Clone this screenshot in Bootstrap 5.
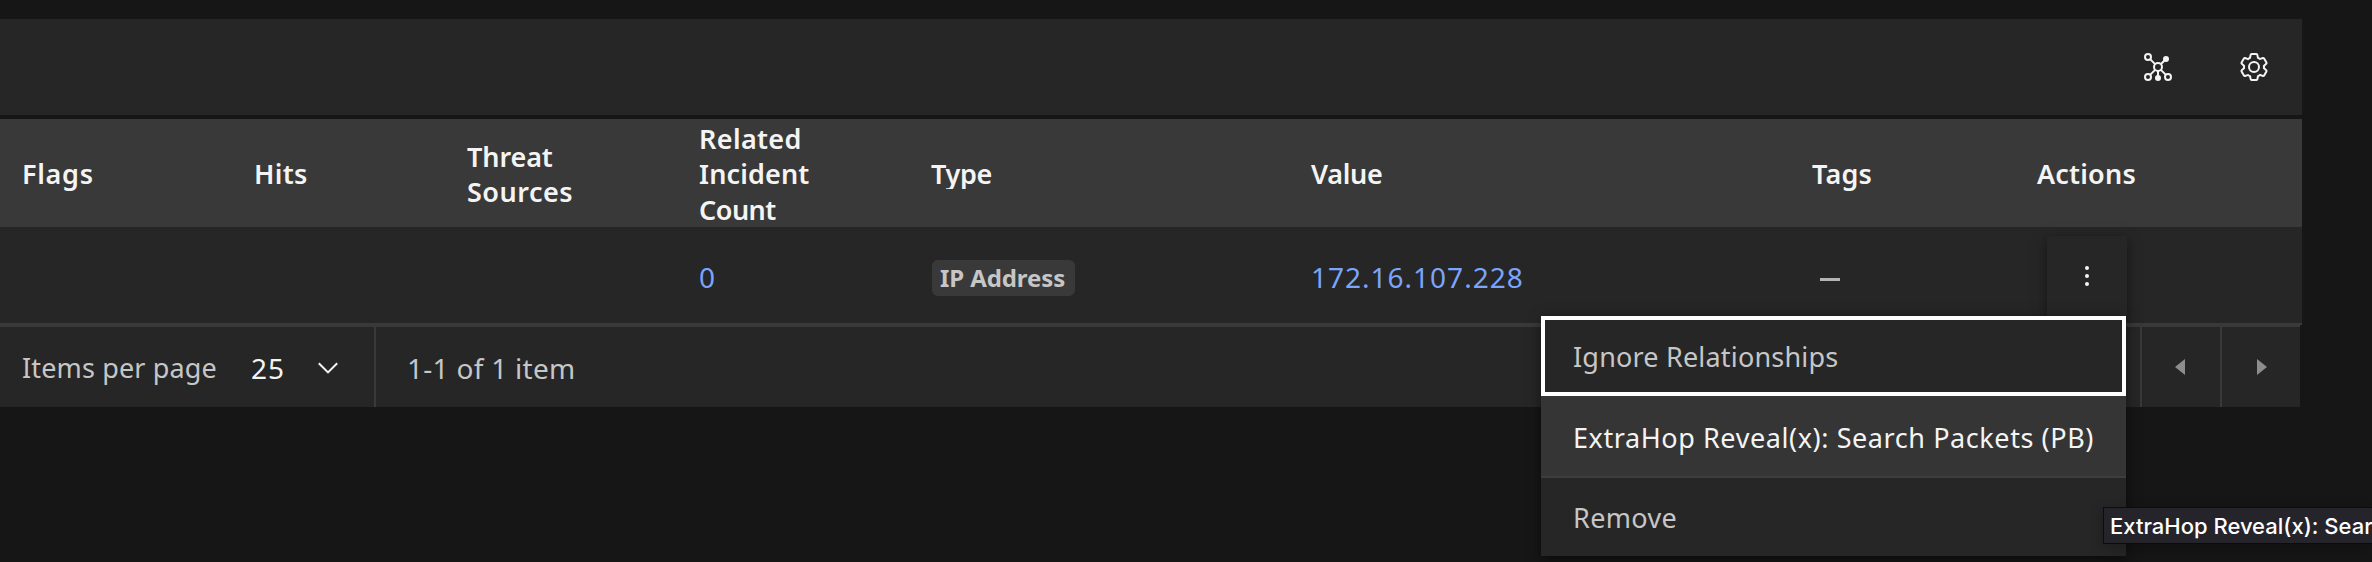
<!DOCTYPE html>
<html lang="en" data-bs-theme="dark">
<head>
<meta charset="utf-8">
<meta name="viewport" content="width=device-width, initial-scale=1">
<title>Artifacts</title>
<link rel="stylesheet" href="https://cdn.jsdelivr.net/npm/bootstrap@5.3.0/dist/css/bootstrap.min.css">
<style>
  body { background: #161616; color: #c6c6c6; font-family: "Noto Sans", sans-serif; font-size: 27px; line-height: 36px; overflow: hidden; height: 562px; }
  .panel { width: 2302px; padding-top: 19px; }
  .toolbar { height: 96px; background: #262626; margin-bottom: 4px; padding-right: 32px; gap: 64px; }
  .toolbar svg { width: 32px; height: 32px; fill: #f4f4f4; display: block; }
  .artifacts { table-layout: fixed; width: 2302px; border-collapse: separate; border-spacing: 0; }
  .artifacts th, .artifacts td { padding: 0 0 0 23px; vertical-align: middle; text-align: left; }
  .artifacts th { height: 108px; padding-top: 2px; line-height: 35.3px; background: #393939; color: #f4f4f4; font-weight: 600; }
  .artifacts th:nth-child(-n+2) { padding-left: 22px; }
  .artifacts td { height: 98px; background: #262626; border-bottom: 2px solid #393939; font-size: 28px; white-space: nowrap; }
  .cell-link { display: inline-block; padding-top: 3px; color: #7ba5fb; text-decoration: none; }
  .clipped { height: 33px; overflow: hidden; margin-bottom: 3px; }
  .type-tag { display: block; width: 143px; height: 36px; margin: 5px 0 0 1px; padding-left: 8px; border-radius: 6px; background: #393939; color: #c6c6c6; font-size: 24px; font-weight: 700; letter-spacing: -.1px; }
  .artifacts td.actions { padding: 9px 0 7px 33px; overflow: visible; }
  .overflow-btn { display: flex; width: 80px; height: 80px; padding: 0; border: 0; border-radius: 0; background: #262626; box-shadow: 0 4px 12px rgba(0,0,0,.5); align-items: center; justify-content: center; }
  .row-menu { display: block; top: 80px; right: 1px; left: auto; width: 585px; padding: 0; margin: 0; border: 0; border-radius: 0; background: #262626; box-shadow: 0 4px 12px rgba(0,0,0,.5); z-index: 5; }
  .row-menu .dropdown-item { display: block; height: 80px; padding: 1px 0 0 32px; line-height: 80px; font-size: 27px; color: #c6c6c6; }
  .row-menu .is-focused { outline: 4px solid #fff; outline-offset: -4px; }
  .row-menu .is-hovered { height: 82px; padding-top: 2px; background: #353535; color: #f4f4f4; border-bottom: 2px solid #3d3d3d; }
  .row-menu .is-last { height: 78px; line-height: 78px; }
  .pager { width: 2300px; height: 82px; background: #262626; border-top: 2px solid #393939; }
  .per-page { width: 376px; padding: 1px 0 0 22px; border-right: 2px solid #393939; }
  .page-size { color: #f4f4f4; font-size: 28px; letter-spacing: 1px; margin-left: 34px; width: 67px; }
  .page-range { padding: 1px 0 0 31px; font-size: 28px; letter-spacing: .28px; }
  .page-btn { width: 80px; border: 0; border-left: 2px solid #393939; background: transparent; padding: 0; }
  .page-btn.prev { padding-left: 33px; }
  .page-btn.next { padding-left: 35px; }
  .page-btn svg { fill: #8d8d8d; display: block; }
  .hover-title { position: absolute; left: 2103px; right: 0; top: 507px; height: 37px; padding-left: 6px; overflow: hidden; background: #25242a; border: 1px solid #0c0c0c; border-right: 0; color: #fff; font: 500 22px/37px Inter, sans-serif; white-space: nowrap; z-index: 10; box-shadow: 0 4px 14px rgba(0,0,0,.25); }
</style>
</head>
<body class="position-relative">
<main class="panel">
  <div class="toolbar d-flex align-items-center justify-content-end">
    <svg viewBox="0 0 32 32" aria-label="Graph">
      <g fill="none" stroke="#f4f4f4" stroke-width="2">
        <circle cx="6" cy="6" r="3"/><circle cx="6" cy="26" r="3"/><circle cx="26" cy="26" r="3"/><circle cx="16" cy="16" r="4"/>
        <path d="M8.1 8.1l5 5M19 13l4-4M13.1 18.9l-5 5M18.9 18.9l5 5M16 20v5"/>
      </g>
      <circle cx="24" cy="8" r="3"/><circle cx="16" cy="27" r="3"/>
    </svg>
    <svg viewBox="0 0 32 32" aria-label="Settings">
      <path d="M27,16.76c0-.25,0-.5,0-.76s0-.51,0-.77l1.92-1.68A2,2,0,0,0,29.3,11L26.94,7a2,2,0,0,0-1.73-1,2,2,0,0,0-.64.1l-2.43.82a11.35,11.35,0,0,0-1.31-.75l-.51-2.52a2,2,0,0,0-2-1.61H13.64a2,2,0,0,0-2,1.61l-.51,2.52a11.48,11.48,0,0,0-1.32.75L7.43,6.06A2,2,0,0,0,6.79,6,2,2,0,0,0,5.06,7L2.7,11a2,2,0,0,0,.41,2.51L5,15.24c0,.25,0,.5,0,.76s0,.51,0,.77L3.11,18.45A2,2,0,0,0,2.7,21L5.06,25a2,2,0,0,0,1.73,1,2,2,0,0,0,.64-.1l2.43-.82a11.35,11.35,0,0,0,1.31.75l.51,2.52a2,2,0,0,0,2,1.61h4.72a2,2,0,0,0,2-1.61l.51-2.52a11.48,11.48,0,0,0,1.32-.75l2.42.82a2,2,0,0,0,.64.1,2,2,0,0,0,1.73-1L29.3,21a2,2,0,0,0-.41-2.51ZM25.21,24l-3.43-1.16a8.86,8.86,0,0,1-2.71,1.57L18.36,28H13.64l-.71-3.55a9.36,9.36,0,0,1-2.7-1.57L6.79,24,4.43,20l2.72-2.4a8.9,8.9,0,0,1,0-3.13L4.43,12,6.79,8l3.43,1.16a8.86,8.86,0,0,1,2.71-1.57L13.64,4h4.72l.71,3.55a9.36,9.36,0,0,1,2.7,1.57L25.21,8,27.57,12l-2.72,2.4a8.9,8.9,0,0,1,0,3.13L27.57,20Z"/>
      <circle cx="16" cy="16" r="5" fill="none" stroke="#f4f4f4" stroke-width="2"/>
    </svg>
  </div>

  <table class="artifacts">
    <colgroup>
      <col style="width:232px"><col style="width:212px"><col style="width:232px"><col style="width:232px"><col style="width:380px"><col style="width:501px"><col style="width:225px"><col style="width:288px">
    </colgroup>
    <thead>
      <tr>
        <th style="letter-spacing:.7px">Flags</th>
        <th style="letter-spacing:.3px">Hits</th>
        <th><span style="letter-spacing:-.1px">Threat</span><br><span style="letter-spacing:.5px">Sources</span></th>
        <th><span style="letter-spacing:.36px">Related</span><br><span style="letter-spacing:.14px">Incident</span><br><span style="letter-spacing:-.5px">Count</span></th>
        <th style="letter-spacing:-.3px"><div class="clipped">Type</div></th>
        <th style="letter-spacing:-.3px">Value</th>
        <th style="letter-spacing:.2px">Tags</th>
        <th style="letter-spacing:.2px">Actions</th>
      </tr>
    </thead>
    <tbody>
      <tr>
        <td></td><td></td><td></td>
        <td><a class="cell-link" href="#">0</a></td>
        <td><span class="type-tag">IP Address</span></td>
        <td><a class="cell-link" href="#" style="letter-spacing:1px">172.16.107.228</a></td>
        <td><svg class="d-block ms-2 mt-2" width="20" height="3"><rect width="20" height="3" fill="#b4b4b4"/></svg></td>
        <td class="actions">
          <div class="dropdown" style="width:80px">
            <button class="overflow-btn" type="button" aria-label="Options">
              <svg width="8" height="24" fill="#f4f4f4"><circle cx="4" cy="4" r="2"/><circle cx="4" cy="12" r="2"/><circle cx="4" cy="20" r="2"/></svg>
            </button>
            <div class="dropdown-menu row-menu position-absolute">
              <a class="dropdown-item is-focused" href="#" style="letter-spacing:.19px">Ignore Relationships</a>
              <a class="dropdown-item is-hovered" href="#" style="letter-spacing:.58px">ExtraHop Reveal(x): Search Packets (PB)</a>
              <a class="dropdown-item is-last" href="#" style="letter-spacing:.34px">Remove</a>
            </div>
          </div>
        </td>
      </tr>
    </tbody>
  </table>

  <div class="pager d-flex align-items-stretch">
    <div class="per-page d-flex align-items-center">
      <span style="letter-spacing:.14px">Items per page</span>
      <span class="page-size">25</span>
      <svg width="20" height="12" fill="none" stroke="#f4f4f4" stroke-width="2"><path d="M.8 1.2L10 10.4 19.2 1.2"/></svg>
    </div>
    <div class="page-range d-flex align-items-center flex-grow-1">1-1 of 1 item</div>
    <button class="page-btn prev d-flex align-items-center" type="button" aria-label="Previous page"><svg width="10" height="16"><path d="M10 0v16L0 8z"/></svg></button>
    <button class="page-btn next d-flex align-items-center" type="button" aria-label="Next page"><svg width="10" height="16"><path d="M0 0v16l10-8z"/></svg></button>
  </div>
</main>
<div class="hover-title">ExtraHop Reveal(x): Search Packets (PB)</div>
<script src="https://cdn.jsdelivr.net/npm/bootstrap@5.3.0/dist/js/bootstrap.bundle.min.js"></script>
</body>
</html>
